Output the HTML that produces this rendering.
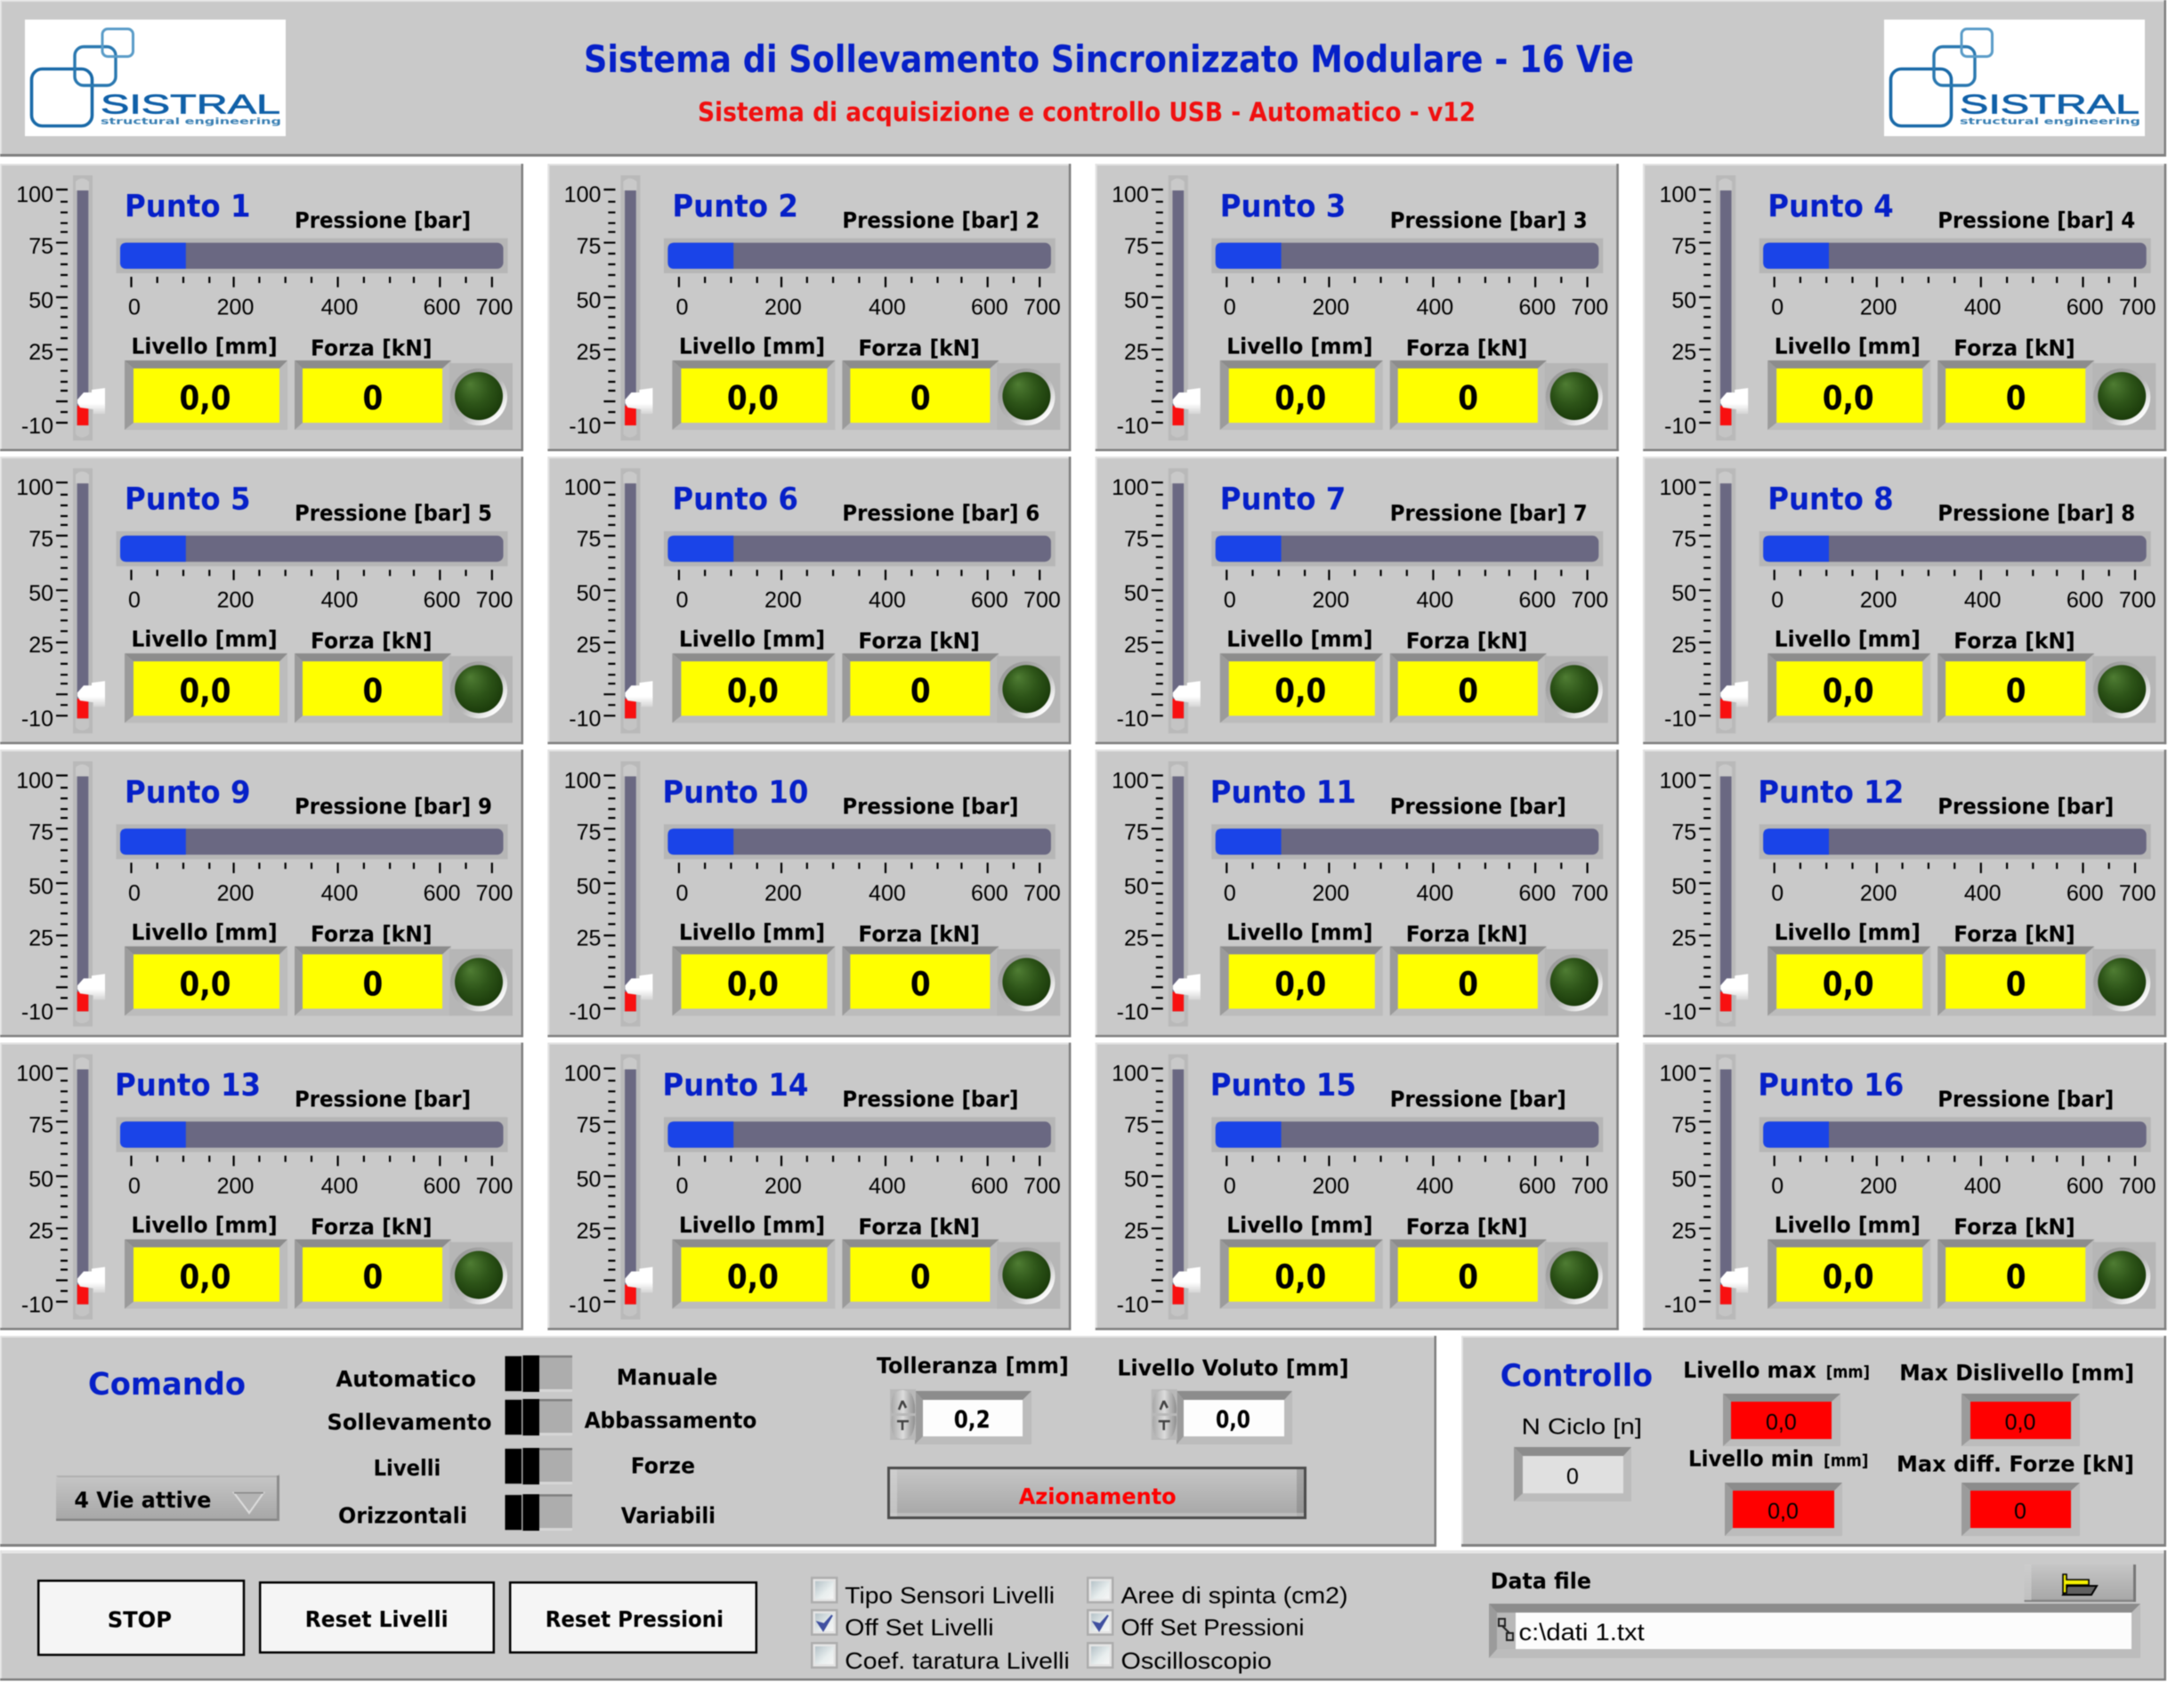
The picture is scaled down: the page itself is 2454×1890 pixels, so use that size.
<!DOCTYPE html>
<html lang="it"><head><meta charset="utf-8"><title>Sistema di Sollevamento Sincronizzato Modulare</title>
<style>
html,body{margin:0;padding:0;background:#fff}
svg{display:block;filter:blur(.5px)}
text{fill:#000;white-space:pre}
.r{font:25px "Liberation Sans",sans-serif}
.e{text-anchor:end}.m{text-anchor:middle}
.b,.t,.v,.l{transform-box:fill-box;transform-origin:0 50%}
.b{font:bold 25px "DejaVu Sans",sans-serif;transform:scaleX(.915)}
.l{font:bold 25px "DejaVu Sans",sans-serif;transform:scaleX(.935)}
.t{font:bold 34.5px "DejaVu Sans",sans-serif;transform:scaleX(.94);fill:#0620c8}
.v{font:bold 37px "DejaVu Sans",sans-serif;transform:scaleX(.885)}
.B{font:bold 25px "DejaVu Sans",sans-serif}
.C{font:bold 35px "DejaVu Sans",sans-serif;fill:#0620c8}
.f0{fill:#bcbcbc}.f1{fill:#8c8c8c}.f2{fill:#9b9b9b}
.rd{fill:#f00}
</style></head><body>
<svg width="2454" height="1890" viewBox="0 0 2454 1890" xmlns="http://www.w3.org/2000/svg">
<defs>
<linearGradient id="gb" x1="0" y1="0" x2="0" y2="1"><stop offset="0" stop-color="#c6c6c6"/><stop offset="1" stop-color="#a6a6a6"/></linearGradient>
<linearGradient id="gt" x1="0" y1="0" x2="0" y2="1"><stop offset="0" stop-color="#fff"/><stop offset=".6" stop-color="#fff"/><stop offset="1" stop-color="#d4d4d4"/></linearGradient>
<linearGradient id="gr" x1="0" y1="0" x2="1" y2="1"><stop offset="0" stop-color="#8f8f8f"/><stop offset=".55" stop-color="#b8b8b8"/><stop offset=".85" stop-color="#fff"/></linearGradient>
<radialGradient id="gl" cx=".45" cy=".42" r=".6" fx=".32" fy=".25"><stop offset="0" stop-color="#4f7d33"/><stop offset=".55" stop-color="#2d5418"/><stop offset="1" stop-color="#1a3a0a"/></radialGradient>
<linearGradient id="gc" x1="0" y1="0" x2="1" y2="1"><stop offset="0" stop-color="#b5c2c8"/><stop offset=".6" stop-color="#e8eeee"/><stop offset="1" stop-color="#f6f6f6"/></linearGradient>
<linearGradient id="gs" x1="0" y1="0" x2="1" y2="0"><stop offset="0" stop-color="#a8a8a8"/><stop offset=".5" stop-color="#dcdcdc"/><stop offset="1" stop-color="#8e8e8e"/></linearGradient>
<g id="p">
<rect x="0" y="184" width="588" height="323" fill="#c9c9c9"/>
<rect x="0" y="184" width="588" height="2" fill="#e2e2e2"/><rect x="0" y="184" width="2" height="323" fill="#e2e2e2"/>
<rect x="585.5" y="184" width="2.5" height="323" fill="#7f7f7f"/><rect x="0" y="504.5" width="588" height="2.5" fill="#7f7f7f"/>
<path d="M63 213H76M68 226.7H76M68 238.7H76M68 250.7H76M68 260.7H76M63 272.7H76M68 285H76M68 297H76M68 309H76M68 321.7H76M63 334H76M68 346H76M68 356H76M68 368H76M68 380H76M63 392.7H76M68 404H76M68 416.7H76M68 429H76M68 439H76M63 451H76M68 463H76M63 475H76" stroke="#000" stroke-width="2.2" fill="none"/>
<rect x="82" y="197" width="22" height="298" fill="#b9b9b9"/>
<path d="M85 214V204Q92 197 100 204V214Z" fill="#c9c9c9"/><path d="M85 478V488Q92 495 100 488V478Z" fill="#c4c4c4"/>
<rect x="86.7" y="214" width="12.6" height="264" fill="#6a6882"/>
<rect x="86.7" y="456" width="12.6" height="22" fill="#f81010"/>
<path d="M87 449L94 441H103V438L118 436V465H105V460L90 458L87 453Z" fill="url(#gt)"/>
<rect x="130.5" y="267.7" width="440" height="39.3" fill="#b6b6b6"/>
<rect x="135" y="272.7" width="430.5" height="29.3" rx="7" fill="#6a6882"/>
<path d="M208.8 272.7H142Q135 272.7 135 279.7V295Q135 302 142 302H208.8Z" fill="#1a44e8"/>
<path d="M147.5 311V322.7M176.7 311V318M206 311V318M235.3 311V318M262.6 311V322.7M291.4 311V318M320.7 311V318M350 311V318M379.6 311V322.7M408.9 311V318M438.1 311V318M465 311V318M494.3 311V322.7M523.5 311V318M552.8 311V322.7" stroke="#000" stroke-width="2.2" fill="none"/>
<rect class="f0" x="140" y="405" width="183" height="78"/><path class="f1" d="M140 405H323L314 414H150Z"/><path class="f2" d="M140 405L150 414V475L140 483Z"/><rect x="150" y="414" width="164" height="61" fill="#ff0"/>
<rect class="f0" x="331" y="405" width="176" height="78"/><path class="f1" d="M331 405H507L497 414H340Z"/><path class="f2" d="M331 405L340 414V475L331 483Z"/><rect x="340" y="414" width="157" height="61" fill="#ff0"/>
<rect x="505" y="408" width="71" height="75" fill="#b6b6b6"/>
<circle cx="538" cy="446" r="32" fill="url(#gr)"/><circle cx="538" cy="445" r="27" fill="url(#gl)"/>
</g>
<g id="sw"><rect x="567.5" y="0" width="75.5" height="41" fill="#adadad"/><rect x="606" y="0" width="37" height="2.5" fill="#808080"/><rect x="606" y="38" width="37" height="3" fill="#d6d6d6"/><rect x="567.5" y="1" width="18.5" height="39" fill="#000"/><rect x="587.5" y="0" width="18.5" height="41" fill="#000"/></g>
<g id="sp"><rect width="29" height="57" fill="#b8b8b8"/><path d="M4 5Q14 -3 24 5Q29 14 28 27H2Q0 14 4 5Z" fill="url(#gs)"/><path d="M4 52Q14 60 24 52Q29 43 28 30H2Q0 43 4 52Z" fill="url(#gs)"/><path d="M14 13L10 23M14 13L18 21" stroke="#444" stroke-width="2.6" fill="none"/><path d="M8 36H21M14 36V46" stroke="#444" stroke-width="2.6" fill="none"/></g>
<g id="cb"><rect width="30.5" height="30" fill="#adadad"/><rect x="2.5" y="2.5" width="25.5" height="25" fill="#e4e4e4"/><rect x="5" y="5" width="20.5" height="20" fill="url(#gc)"/></g>
</defs>

<!-- header -->
<rect x="0" y="0" width="2434" height="176" fill="#c9c9c9"/>
<rect x="0" y="0" width="2434" height="2" fill="#e2e2e2"/><rect x="0" y="0" width="2" height="176" fill="#e2e2e2"/>
<rect x="0" y="173" width="2434" height="3" fill="#7f7f7f"/><rect x="2431.5" y="0" width="2.5" height="176" fill="#7f7f7f"/>

<g>
<rect x="28" y="22" width="293" height="131" fill="#fff"/>
<rect x="35.5" y="77.5" width="68" height="64" rx="12" fill="none" stroke="#1a6aa8" stroke-width="3.6"/>
<rect x="84" y="52.5" width="46" height="43.5" rx="10" fill="none" stroke="#2a78b0" stroke-width="3.4"/>
<rect x="115" y="32.5" width="34.5" height="31" rx="6" fill="none" stroke="#5a9cc8" stroke-width="3"/>
<text x="113" y="127.7" textLength="202" lengthAdjust="spacingAndGlyphs" style="font:31px 'Liberation Sans',sans-serif;fill:#1060a8;stroke:#1060a8;stroke-width:.7">SISTRAL</text>
<text x="113" y="139.5" textLength="203" lengthAdjust="spacingAndGlyphs" style="font:bold 10px 'DejaVu Sans',sans-serif;fill:#3a80b4">structural engineering</text>
</g>
<g transform="translate(2089,0)">
<rect x="28" y="22" width="293" height="131" fill="#fff"/>
<rect x="35.5" y="77.5" width="68" height="64" rx="12" fill="none" stroke="#1a6aa8" stroke-width="3.6"/>
<rect x="84" y="52.5" width="46" height="43.5" rx="10" fill="none" stroke="#2a78b0" stroke-width="3.4"/>
<rect x="115" y="32.5" width="34.5" height="31" rx="6" fill="none" stroke="#5a9cc8" stroke-width="3"/>
<text x="113" y="127.7" textLength="202" lengthAdjust="spacingAndGlyphs" style="font:31px 'Liberation Sans',sans-serif;fill:#1060a8;stroke:#1060a8;stroke-width:.7">SISTRAL</text>
<text x="113" y="139.5" textLength="203" lengthAdjust="spacingAndGlyphs" style="font:bold 10px 'DejaVu Sans',sans-serif;fill:#3a80b4">structural engineering</text>
</g>
<text x="656" y="81" textLength="1180" lengthAdjust="spacingAndGlyphs" style="font:bold 42px 'DejaVu Sans',sans-serif;fill:#0620c8">Sistema di Sollevamento Sincronizzato Modulare - 16 Vie</text>
<text x="784" y="136" textLength="874" lengthAdjust="spacingAndGlyphs" style="font:bold 29px 'DejaVu Sans',sans-serif;fill:#f01010">Sistema di acquisizione e controllo USB - Automatico - v12</text>

<!-- row 1 -->
<g transform="translate(0,0)"><use href="#p"/><text class="r e" x="60" y="227">100</text><text class="r e" x="60" y="285">75</text><text class="r e" x="60" y="346">50</text><text class="r e" x="60" y="404">25</text><text class="r e" x="60" y="487">-10</text><text class="t" x="140" y="243.5">Punto 1</text><text class="b" x="331" y="256">Pressione [bar]</text><text class="r m" x="151" y="353.5">0</text><text class="r m" x="264.5" y="353.5">200</text><text class="r m" x="381.5" y="353.5">400</text><text class="r m" x="496.5" y="353.5">600</text><text class="r m" x="555.5" y="353.5">700</text><text class="l" x="147.5" y="397.5">Livello [mm]</text><text class="l" x="349" y="399.5">Forza [kN]</text><text class="v" x="201.5" y="460">0,0</text><text class="v" x="407.5" y="460">0</text></g>
<g transform="translate(615.4,0)"><use href="#p"/><text class="r e" x="60" y="227">100</text><text class="r e" x="60" y="285">75</text><text class="r e" x="60" y="346">50</text><text class="r e" x="60" y="404">25</text><text class="r e" x="60" y="487">-10</text><text class="t" x="140" y="243.5">Punto 2</text><text class="b" x="331" y="256">Pressione [bar] 2</text><text class="r m" x="151" y="353.5">0</text><text class="r m" x="264.5" y="353.5">200</text><text class="r m" x="381.5" y="353.5">400</text><text class="r m" x="496.5" y="353.5">600</text><text class="r m" x="555.5" y="353.5">700</text><text class="l" x="147.5" y="397.5">Livello [mm]</text><text class="l" x="349" y="399.5">Forza [kN]</text><text class="v" x="201.5" y="460">0,0</text><text class="v" x="407.5" y="460">0</text></g>
<g transform="translate(1230.8,0)"><use href="#p"/><text class="r e" x="60" y="227">100</text><text class="r e" x="60" y="285">75</text><text class="r e" x="60" y="346">50</text><text class="r e" x="60" y="404">25</text><text class="r e" x="60" y="487">-10</text><text class="t" x="140" y="243.5">Punto 3</text><text class="b" x="331" y="256">Pressione [bar] 3</text><text class="r m" x="151" y="353.5">0</text><text class="r m" x="264.5" y="353.5">200</text><text class="r m" x="381.5" y="353.5">400</text><text class="r m" x="496.5" y="353.5">600</text><text class="r m" x="555.5" y="353.5">700</text><text class="l" x="147.5" y="397.5">Livello [mm]</text><text class="l" x="349" y="399.5">Forza [kN]</text><text class="v" x="201.5" y="460">0,0</text><text class="v" x="407.5" y="460">0</text></g>
<g transform="translate(1846.2,0)"><use href="#p"/><text class="r e" x="60" y="227">100</text><text class="r e" x="60" y="285">75</text><text class="r e" x="60" y="346">50</text><text class="r e" x="60" y="404">25</text><text class="r e" x="60" y="487">-10</text><text class="t" x="140" y="243.5">Punto 4</text><text class="b" x="331" y="256">Pressione [bar] 4</text><text class="r m" x="151" y="353.5">0</text><text class="r m" x="264.5" y="353.5">200</text><text class="r m" x="381.5" y="353.5">400</text><text class="r m" x="496.5" y="353.5">600</text><text class="r m" x="555.5" y="353.5">700</text><text class="l" x="147.5" y="397.5">Livello [mm]</text><text class="l" x="349" y="399.5">Forza [kN]</text><text class="v" x="201.5" y="460">0,0</text><text class="v" x="407.5" y="460">0</text></g>
<!-- row 2 -->
<g transform="translate(0,329.2)"><use href="#p"/><text class="r e" x="60" y="227">100</text><text class="r e" x="60" y="285">75</text><text class="r e" x="60" y="346">50</text><text class="r e" x="60" y="404">25</text><text class="r e" x="60" y="487">-10</text><text class="t" x="140" y="243.5">Punto 5</text><text class="b" x="331" y="256">Pressione [bar] 5</text><text class="r m" x="151" y="353.5">0</text><text class="r m" x="264.5" y="353.5">200</text><text class="r m" x="381.5" y="353.5">400</text><text class="r m" x="496.5" y="353.5">600</text><text class="r m" x="555.5" y="353.5">700</text><text class="l" x="147.5" y="397.5">Livello [mm]</text><text class="l" x="349" y="399.5">Forza [kN]</text><text class="v" x="201.5" y="460">0,0</text><text class="v" x="407.5" y="460">0</text></g>
<g transform="translate(615.4,329.2)"><use href="#p"/><text class="r e" x="60" y="227">100</text><text class="r e" x="60" y="285">75</text><text class="r e" x="60" y="346">50</text><text class="r e" x="60" y="404">25</text><text class="r e" x="60" y="487">-10</text><text class="t" x="140" y="243.5">Punto 6</text><text class="b" x="331" y="256">Pressione [bar] 6</text><text class="r m" x="151" y="353.5">0</text><text class="r m" x="264.5" y="353.5">200</text><text class="r m" x="381.5" y="353.5">400</text><text class="r m" x="496.5" y="353.5">600</text><text class="r m" x="555.5" y="353.5">700</text><text class="l" x="147.5" y="397.5">Livello [mm]</text><text class="l" x="349" y="399.5">Forza [kN]</text><text class="v" x="201.5" y="460">0,0</text><text class="v" x="407.5" y="460">0</text></g>
<g transform="translate(1230.8,329.2)"><use href="#p"/><text class="r e" x="60" y="227">100</text><text class="r e" x="60" y="285">75</text><text class="r e" x="60" y="346">50</text><text class="r e" x="60" y="404">25</text><text class="r e" x="60" y="487">-10</text><text class="t" x="140" y="243.5">Punto 7</text><text class="b" x="331" y="256">Pressione [bar] 7</text><text class="r m" x="151" y="353.5">0</text><text class="r m" x="264.5" y="353.5">200</text><text class="r m" x="381.5" y="353.5">400</text><text class="r m" x="496.5" y="353.5">600</text><text class="r m" x="555.5" y="353.5">700</text><text class="l" x="147.5" y="397.5">Livello [mm]</text><text class="l" x="349" y="399.5">Forza [kN]</text><text class="v" x="201.5" y="460">0,0</text><text class="v" x="407.5" y="460">0</text></g>
<g transform="translate(1846.2,329.2)"><use href="#p"/><text class="r e" x="60" y="227">100</text><text class="r e" x="60" y="285">75</text><text class="r e" x="60" y="346">50</text><text class="r e" x="60" y="404">25</text><text class="r e" x="60" y="487">-10</text><text class="t" x="140" y="243.5">Punto 8</text><text class="b" x="331" y="256">Pressione [bar] 8</text><text class="r m" x="151" y="353.5">0</text><text class="r m" x="264.5" y="353.5">200</text><text class="r m" x="381.5" y="353.5">400</text><text class="r m" x="496.5" y="353.5">600</text><text class="r m" x="555.5" y="353.5">700</text><text class="l" x="147.5" y="397.5">Livello [mm]</text><text class="l" x="349" y="399.5">Forza [kN]</text><text class="v" x="201.5" y="460">0,0</text><text class="v" x="407.5" y="460">0</text></g>
<!-- row 3 -->
<g transform="translate(0,658.4)"><use href="#p"/><text class="r e" x="60" y="227">100</text><text class="r e" x="60" y="285">75</text><text class="r e" x="60" y="346">50</text><text class="r e" x="60" y="404">25</text><text class="r e" x="60" y="487">-10</text><text class="t" x="140" y="243.5">Punto 9</text><text class="b" x="331" y="256">Pressione [bar] 9</text><text class="r m" x="151" y="353.5">0</text><text class="r m" x="264.5" y="353.5">200</text><text class="r m" x="381.5" y="353.5">400</text><text class="r m" x="496.5" y="353.5">600</text><text class="r m" x="555.5" y="353.5">700</text><text class="l" x="147.5" y="397.5">Livello [mm]</text><text class="l" x="349" y="399.5">Forza [kN]</text><text class="v" x="201.5" y="460">0,0</text><text class="v" x="407.5" y="460">0</text></g>
<g transform="translate(615.4,658.4)"><use href="#p"/><text class="r e" x="60" y="227">100</text><text class="r e" x="60" y="285">75</text><text class="r e" x="60" y="346">50</text><text class="r e" x="60" y="404">25</text><text class="r e" x="60" y="487">-10</text><text class="t" x="129" y="243.5">Punto 10</text><text class="b" x="331" y="256">Pressione [bar]</text><text class="r m" x="151" y="353.5">0</text><text class="r m" x="264.5" y="353.5">200</text><text class="r m" x="381.5" y="353.5">400</text><text class="r m" x="496.5" y="353.5">600</text><text class="r m" x="555.5" y="353.5">700</text><text class="l" x="147.5" y="397.5">Livello [mm]</text><text class="l" x="349" y="399.5">Forza [kN]</text><text class="v" x="201.5" y="460">0,0</text><text class="v" x="407.5" y="460">0</text></g>
<g transform="translate(1230.8,658.4)"><use href="#p"/><text class="r e" x="60" y="227">100</text><text class="r e" x="60" y="285">75</text><text class="r e" x="60" y="346">50</text><text class="r e" x="60" y="404">25</text><text class="r e" x="60" y="487">-10</text><text class="t" x="129" y="243.5">Punto 11</text><text class="b" x="331" y="256">Pressione [bar]</text><text class="r m" x="151" y="353.5">0</text><text class="r m" x="264.5" y="353.5">200</text><text class="r m" x="381.5" y="353.5">400</text><text class="r m" x="496.5" y="353.5">600</text><text class="r m" x="555.5" y="353.5">700</text><text class="l" x="147.5" y="397.5">Livello [mm]</text><text class="l" x="349" y="399.5">Forza [kN]</text><text class="v" x="201.5" y="460">0,0</text><text class="v" x="407.5" y="460">0</text></g>
<g transform="translate(1846.2,658.4)"><use href="#p"/><text class="r e" x="60" y="227">100</text><text class="r e" x="60" y="285">75</text><text class="r e" x="60" y="346">50</text><text class="r e" x="60" y="404">25</text><text class="r e" x="60" y="487">-10</text><text class="t" x="129" y="243.5">Punto 12</text><text class="b" x="331" y="256">Pressione [bar]</text><text class="r m" x="151" y="353.5">0</text><text class="r m" x="264.5" y="353.5">200</text><text class="r m" x="381.5" y="353.5">400</text><text class="r m" x="496.5" y="353.5">600</text><text class="r m" x="555.5" y="353.5">700</text><text class="l" x="147.5" y="397.5">Livello [mm]</text><text class="l" x="349" y="399.5">Forza [kN]</text><text class="v" x="201.5" y="460">0,0</text><text class="v" x="407.5" y="460">0</text></g>
<!-- row 4 -->
<g transform="translate(0,987.6)"><use href="#p"/><text class="r e" x="60" y="227">100</text><text class="r e" x="60" y="285">75</text><text class="r e" x="60" y="346">50</text><text class="r e" x="60" y="404">25</text><text class="r e" x="60" y="487">-10</text><text class="t" x="129" y="243.5">Punto 13</text><text class="b" x="331" y="256">Pressione [bar]</text><text class="r m" x="151" y="353.5">0</text><text class="r m" x="264.5" y="353.5">200</text><text class="r m" x="381.5" y="353.5">400</text><text class="r m" x="496.5" y="353.5">600</text><text class="r m" x="555.5" y="353.5">700</text><text class="l" x="147.5" y="397.5">Livello [mm]</text><text class="l" x="349" y="399.5">Forza [kN]</text><text class="v" x="201.5" y="460">0,0</text><text class="v" x="407.5" y="460">0</text></g>
<g transform="translate(615.4,987.6)"><use href="#p"/><text class="r e" x="60" y="227">100</text><text class="r e" x="60" y="285">75</text><text class="r e" x="60" y="346">50</text><text class="r e" x="60" y="404">25</text><text class="r e" x="60" y="487">-10</text><text class="t" x="129" y="243.5">Punto 14</text><text class="b" x="331" y="256">Pressione [bar]</text><text class="r m" x="151" y="353.5">0</text><text class="r m" x="264.5" y="353.5">200</text><text class="r m" x="381.5" y="353.5">400</text><text class="r m" x="496.5" y="353.5">600</text><text class="r m" x="555.5" y="353.5">700</text><text class="l" x="147.5" y="397.5">Livello [mm]</text><text class="l" x="349" y="399.5">Forza [kN]</text><text class="v" x="201.5" y="460">0,0</text><text class="v" x="407.5" y="460">0</text></g>
<g transform="translate(1230.8,987.6)"><use href="#p"/><text class="r e" x="60" y="227">100</text><text class="r e" x="60" y="285">75</text><text class="r e" x="60" y="346">50</text><text class="r e" x="60" y="404">25</text><text class="r e" x="60" y="487">-10</text><text class="t" x="129" y="243.5">Punto 15</text><text class="b" x="331" y="256">Pressione [bar]</text><text class="r m" x="151" y="353.5">0</text><text class="r m" x="264.5" y="353.5">200</text><text class="r m" x="381.5" y="353.5">400</text><text class="r m" x="496.5" y="353.5">600</text><text class="r m" x="555.5" y="353.5">700</text><text class="l" x="147.5" y="397.5">Livello [mm]</text><text class="l" x="349" y="399.5">Forza [kN]</text><text class="v" x="201.5" y="460">0,0</text><text class="v" x="407.5" y="460">0</text></g>
<g transform="translate(1846.2,987.6)"><use href="#p"/><text class="r e" x="60" y="227">100</text><text class="r e" x="60" y="285">75</text><text class="r e" x="60" y="346">50</text><text class="r e" x="60" y="404">25</text><text class="r e" x="60" y="487">-10</text><text class="t" x="129" y="243.5">Punto 16</text><text class="b" x="331" y="256">Pressione [bar]</text><text class="r m" x="151" y="353.5">0</text><text class="r m" x="264.5" y="353.5">200</text><text class="r m" x="381.5" y="353.5">400</text><text class="r m" x="496.5" y="353.5">600</text><text class="r m" x="555.5" y="353.5">700</text><text class="l" x="147.5" y="397.5">Livello [mm]</text><text class="l" x="349" y="399.5">Forza [kN]</text><text class="v" x="201.5" y="460">0,0</text><text class="v" x="407.5" y="460">0</text></g>

<!-- Comando panel -->
<rect x="0" y="1501" width="1614" height="237" fill="#c9c9c9"/>
<rect x="0" y="1501" width="1614" height="2" fill="#e2e2e2"/><rect x="0" y="1501" width="2" height="237" fill="#e2e2e2"/>
<rect x="1611.5" y="1501" width="2.5" height="237" fill="#7f7f7f"/><rect x="0" y="1735" width="1614" height="3" fill="#7f7f7f"/>
<text class="C" x="99" y="1567" textLength="177" lengthAdjust="spacingAndGlyphs">Comando</text>
<text class="B" x="377.4" y="1558" textLength="157.6" lengthAdjust="spacingAndGlyphs">Automatico</text>
<text class="B" x="367.5" y="1606.7" textLength="185" lengthAdjust="spacingAndGlyphs">Sollevamento</text>
<text class="B" x="419.6" y="1658" textLength="75.7" lengthAdjust="spacingAndGlyphs">Livelli</text>
<text class="B" x="380" y="1711.7" textLength="145" lengthAdjust="spacingAndGlyphs">Orizzontali</text>
<text class="B" x="692.8" y="1556" textLength="113.6" lengthAdjust="spacingAndGlyphs">Manuale</text>
<text class="B" x="656.6" y="1604.3" textLength="193.7" lengthAdjust="spacingAndGlyphs">Abbassamento</text>
<text class="B" x="708.7" y="1655.7" textLength="72.3" lengthAdjust="spacingAndGlyphs">Forze</text>
<text class="B" x="697.8" y="1711.7" textLength="106.2" lengthAdjust="spacingAndGlyphs">Variabili</text>
<use href="#sw" y="1523"/><use href="#sw" y="1572"/><use href="#sw" y="1627"/><use href="#sw" y="1679"/>
<rect x="63" y="1658" width="251" height="51" fill="url(#gb)"/>
<path d="M63 1658H312L314 1656V1709H312V1660H65Z" fill="#8a8a8a" opacity=".35"/>
<rect x="63" y="1706.5" width="251" height="2.5" fill="#848484"/><rect x="311" y="1658" width="3" height="51" fill="#8c8c8c"/>
<text class="B" x="83.4" y="1694" textLength="154" lengthAdjust="spacingAndGlyphs">4 Vie attive</text>
<path d="M263 1677.5H296L280 1700Z" fill="#b4b4b4" stroke="#dcdcdc" stroke-width="2"/>
<path d="M263 1677.5H296" stroke="#7a7a7a" stroke-width="1.5"/>
<text class="B" x="985" y="1543" textLength="215.8" lengthAdjust="spacingAndGlyphs">Tolleranza [mm]</text>
<text class="B" x="1255.4" y="1545.7" textLength="260.2" lengthAdjust="spacingAndGlyphs">Livello Voluto [mm]</text>
<rect class="f0" x="1028" y="1563" width="131" height="60"/><path class="f1" d="M1028 1563H1159L1149 1573H1037Z"/><path class="f2" d="M1028 1563L1037 1573V1614L1028 1623Z"/><rect x="1037" y="1573" width="112" height="41" fill="#fdfdfd"/>
<use href="#sp" x="1000" y="1561"/>
<text class="B" x="1071.7" y="1604" textLength="41" lengthAdjust="spacingAndGlyphs" style="font-size:27px">0,2</text>
<rect class="f0" x="1322" y="1563" width="130" height="60"/><path class="f1" d="M1322 1563H1452L1443 1573H1330Z"/><path class="f2" d="M1322 1563L1330 1573V1614L1322 1623Z"/><rect x="1330" y="1573" width="113" height="41" fill="#fdfdfd"/>
<use href="#sp" x="1293.7" y="1561"/>
<text class="B" x="1366" y="1604" textLength="39" lengthAdjust="spacingAndGlyphs" style="font-size:27px">0,0</text>
<rect x="998.5" y="1649.5" width="468" height="56" fill="url(#gb)" stroke="#4c4c4c" stroke-width="3"/>
<rect x="1000" y="1651" width="8" height="53" fill="#d4d4d4" opacity=".6"/><rect x="1457" y="1651" width="8" height="53" fill="#6e6e6e" opacity=".35"/>
<rect x="1000" y="1700" width="465" height="4" fill="#d0d0d0" opacity=".5"/>
<text class="B" x="1144.7" y="1690" textLength="177" lengthAdjust="spacingAndGlyphs" style="fill:#f00">Azionamento</text>

<!-- Controllo panel -->
<rect x="1642" y="1501" width="792" height="237" fill="#c9c9c9"/>
<rect x="1642" y="1501" width="792" height="2" fill="#e2e2e2"/><rect x="1642" y="1501" width="2" height="237" fill="#e2e2e2"/>
<rect x="2431.5" y="1501" width="2.5" height="237" fill="#7f7f7f"/><rect x="1642" y="1735" width="792" height="3" fill="#7f7f7f"/>
<text class="C" x="1685.7" y="1557.7" textLength="171.3" lengthAdjust="spacingAndGlyphs">Controllo</text>
<text class="B" x="1891.3" y="1548" textLength="149.5" lengthAdjust="spacingAndGlyphs">Livello max</text>
<text class="B" x="2051.7" y="1548" textLength="49.3" lengthAdjust="spacingAndGlyphs" style="font-size:19px">[mm]</text>
<text class="B" x="2134.3" y="1551" textLength="263.7" lengthAdjust="spacingAndGlyphs">Max Dislivello [mm]</text>
<text class="B" x="1897" y="1647.7" textLength="141" lengthAdjust="spacingAndGlyphs">Livello min</text>
<text class="B" x="2049" y="1647.7" textLength="50.5" lengthAdjust="spacingAndGlyphs" style="font-size:19px">[mm]</text>
<text class="B" x="2131" y="1653.3" textLength="267" lengthAdjust="spacingAndGlyphs">Max diff. Forze [kN]</text>
<text class="r" x="1709.6" y="1611.7" textLength="135.4" lengthAdjust="spacingAndGlyphs">N Ciclo [n]</text>
<rect class="f0" x="1701" y="1626" width="132" height="61"/><path class="f1" d="M1701 1626H1833L1824 1636H1711Z"/><path class="f2" d="M1701 1626L1711 1636V1678L1701 1687Z"/><rect x="1711" y="1636" width="113" height="42" fill="#e0e0e0"/>
<text class="r m" x="1767" y="1667.7">0</text>
<rect class="f0" x="1936" y="1566" width="132" height="59"/><path class="f1" d="M1936 1566H2068L2058 1575H1945Z"/><path class="f2" d="M1936 1566L1945 1575V1617L1936 1625Z"/><rect class="rd" x="1945" y="1575" width="113" height="42"/>
<text class="r m" x="2001.4" y="1606.7">0,0</text>
<rect class="f0" x="2204" y="1566" width="133" height="59"/><path class="f1" d="M2204 1566H2337L2327 1575H2214Z"/><path class="f2" d="M2204 1566L2214 1575V1617L2204 1625Z"/><rect class="rd" x="2214" y="1575" width="113" height="42"/>
<text class="r m" x="2270" y="1606.7">0,0</text>
<rect class="f0" x="1938" y="1666" width="132" height="60"/><path class="f1" d="M1938 1666H2070L2061 1675H1947Z"/><path class="f2" d="M1938 1666L1947 1675V1717L1938 1726Z"/><rect class="rd" x="1947" y="1675" width="114" height="42"/>
<text class="r m" x="2003.5" y="1706.7">0,0</text>
<rect class="f0" x="2204" y="1666" width="133" height="60"/><path class="f1" d="M2204 1666H2337L2327 1675H2214Z"/><path class="f2" d="M2204 1666L2214 1675V1717L2204 1726Z"/><rect class="rd" x="2214" y="1675" width="113" height="42"/>
<text class="r m" x="2270" y="1706.7">0</text>

<!-- Bottom panel -->
<rect x="0" y="1742" width="2434" height="146" fill="#c9c9c9"/>
<rect x="0" y="1742" width="2434" height="3.5" fill="#e6e6e6"/><rect x="0" y="1742" width="2" height="146" fill="#e2e2e2"/>
<rect x="2431.5" y="1742" width="2.5" height="146" fill="#7f7f7f"/><rect x="0" y="1886" width="2434" height="2.5" fill="#7f7f7f"/>
<rect x="43.2" y="1776.2" width="230.8" height="83.3" fill="#f5f5f5" stroke="#000" stroke-width="2.5"/>
<text class="B" x="120.7" y="1828.3" textLength="72.3" lengthAdjust="spacingAndGlyphs">STOP</text>
<rect x="292.2" y="1778.2" width="262.6" height="78.6" fill="#f5f5f5" stroke="#000" stroke-width="2.5"/>
<text class="B" x="342.8" y="1828" textLength="160.8" lengthAdjust="spacingAndGlyphs">Reset Livelli</text>
<rect x="573.2" y="1778.2" width="276.6" height="78.6" fill="#f5f5f5" stroke="#000" stroke-width="2.5"/>
<text class="B" x="612.7" y="1828" textLength="200.3" lengthAdjust="spacingAndGlyphs">Reset Pressioni</text>

<use href="#cb" x="911" y="1771.7"/><use href="#cb" x="911" y="1808"/><use href="#cb" x="911" y="1845"/>
<use href="#cb" x="1221" y="1771.7"/><use href="#cb" x="1221" y="1808"/><use href="#cb" x="1221" y="1845"/>
<path d="M919 1823L925 1832L935 1815L926 1825Z" fill="#4050a0" stroke="#4050a0" stroke-width="2"/>
<path d="M1229 1823L1235 1832L1245 1815L1236 1825Z" fill="#4050a0" stroke="#4050a0" stroke-width="2"/>
<text class="r" x="949.3" y="1801.7" textLength="235.7" lengthAdjust="spacingAndGlyphs" style="font-size:26px">Tipo Sensori Livelli</text>
<text class="r" x="949.3" y="1837.7" textLength="167.3" lengthAdjust="spacingAndGlyphs" style="font-size:26px">Off Set Livelli</text>
<text class="r" x="949.3" y="1875" textLength="252.5" lengthAdjust="spacingAndGlyphs" style="font-size:26px">Coef. taratura Livelli</text>
<text class="r" x="1259.5" y="1801.7" textLength="255" lengthAdjust="spacingAndGlyphs" style="font-size:26px">Aree di spinta (cm2)</text>
<text class="r" x="1259.5" y="1837.7" textLength="206" lengthAdjust="spacingAndGlyphs" style="font-size:26px">Off Set Pressioni</text>
<text class="r" x="1259.5" y="1875" textLength="169.4" lengthAdjust="spacingAndGlyphs" style="font-size:26px">Oscilloscopio</text>

<text class="B" x="1674.8" y="1785" textLength="113.2" lengthAdjust="spacingAndGlyphs">Data file</text>
<rect x="2274.5" y="1758" width="125.5" height="42" fill="url(#gb)"/>
<rect x="2274.5" y="1797.5" width="125.5" height="2.5" fill="#848484"/><rect x="2397" y="1758" width="3" height="42" fill="#777"/>
<rect x="2274.5" y="1758" width="8" height="40" fill="#d0d0d0" opacity=".6"/>
<path d="M2323 1782H2356L2350 1792H2318Z" fill="#606060" stroke="#000" stroke-width="2"/>
<path d="M2318 1790V1769H2322V1775H2347V1781H2322V1790Z" fill="#f4f000" stroke="#000" stroke-width="1.6"/>
<rect class="f0" x="1673" y="1802" width="732" height="61"/><path class="f1" d="M1673 1802H2405L2395 1812H1682Z"/><path class="f2" d="M1673 1802L1682 1812V1853L1673 1863Z"/>
<rect x="1682" y="1812" width="21" height="41" fill="#b8b8b8"/>
<rect x="1703" y="1812" width="692" height="41" fill="#fcfcfc"/>
<rect x="1684" y="1819" width="7" height="8" fill="none" stroke="#222" stroke-width="2"/><rect x="1693" y="1835" width="7" height="8" fill="none" stroke="#222" stroke-width="2"/><path d="M1688 1827L1696 1835" stroke="#222" stroke-width="2"/>
<text class="r" x="1706.5" y="1843" textLength="141.2" lengthAdjust="spacingAndGlyphs" style="font-size:27px">c:\dati 1.txt</text>
</svg>
</body></html>
